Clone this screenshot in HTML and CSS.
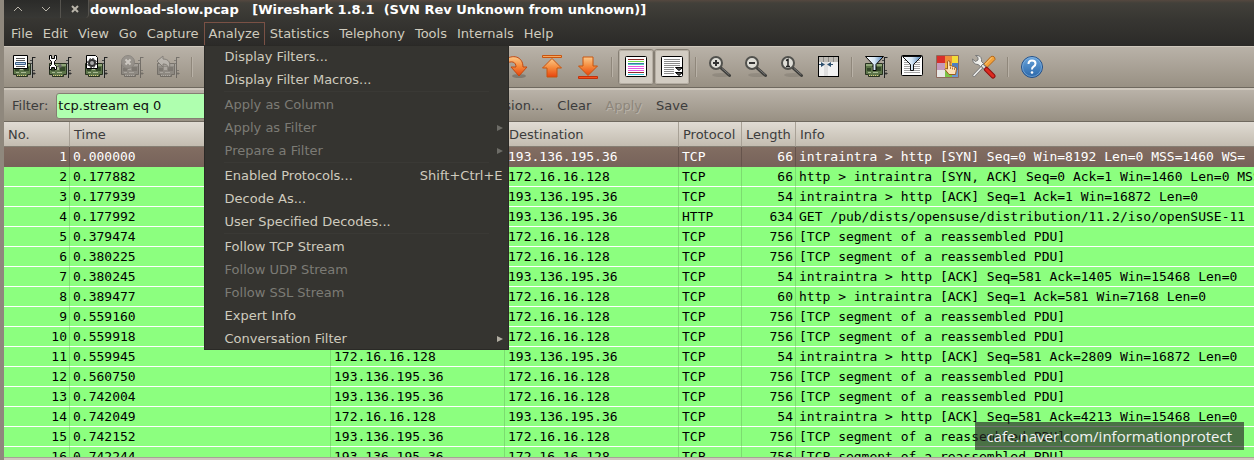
FILE: index.html
```html
<!DOCTYPE html>
<html lang="en">
<head>
  <meta charset="utf-8">
  <title>download-slow.pcap</title>
  <link rel="stylesheet" href="styles.css">
</head>
<body>
  <!-- shared icon parts -->
  <svg class="defs" width="0" height="0" aria-hidden="true">
    <defs>
      <linearGradient id="orange" x1="0" y1="0" x2="0" y2="1">
        <stop offset="0" stop-color="#fcc98a"/>
        <stop offset="0.5" stop-color="#f58a3c"/>
        <stop offset="1" stop-color="#e8430e"/>
      </linearGradient>
      <linearGradient id="funnel" x1="0" y1="0" x2="1" y2="0">
        <stop offset="0" stop-color="#ffffff"/>
        <stop offset="0.5" stop-color="#d5e6f5"/>
        <stop offset="1" stop-color="#4a7db5"/>
      </linearGradient>
      <linearGradient id="blue" x1="0" y1="0" x2="0" y2="1">
        <stop offset="0" stop-color="#6aa5dc"/>
        <stop offset="1" stop-color="#2a66a8"/>
      </linearGradient>
      <symbol id="nic" viewBox="0 0 24 24">
        <path d="M1.500 8.500h17v11h-3v2H4.500v-2h-3z" fill="#5d7549" stroke="#26311e"/>
        <path d="M2 9h16v2H2z" fill="#8fa578"/>
        <path d="M3 13h4v3H3zM12 12h5v4h-5z" fill="#34482a"/>
        <path d="M8 12h3v3H8zM4 17h3v1H4zM9 17h5v1H9z" fill="#a9b893"/>
        <path d="M5 20.500h10" stroke="#d9cb7c" stroke-dasharray="1 1"/>
        <path d="M19.500 4v17" stroke="#a3a8a2"/>
        <path d="M20.500 2v21M20.500 2.500h3M20.500 18.500h3" stroke="#222" fill="none"/>
        <path d="M18 5.500h2M18 8.500h2M21 15.500h2M22 17v3" stroke="#444"/>
      </symbol>
      <symbol id="lens" viewBox="0 0 24 24">
        <ellipse cx="13" cy="20" rx="9" ry="2" fill="#000" opacity="0.1"/>
        <path d="M13 13l8.500 7.500" stroke="#3d3d3a" stroke-width="3" stroke-linecap="round"/>
        <path d="M14 13.500l7 6" stroke="#777" stroke-width="1" stroke-linecap="round"/>
        <circle cx="8" cy="8" r="6" fill="#deddd6" stroke="#51514d" stroke-width="2"/>
      </symbol>
    </defs>
  </svg>

  <header class="titlebar">
    <div class="window-buttons">
      <button aria-label="Minimize"><svg width="10" height="8" viewBox="0 0 10 8"><path d="M1 6l4-4 4 4"/></svg></button>
      <button aria-label="Maximize"><svg width="10" height="8" viewBox="0 0 10 8"><path d="M1 2l4 4 4-4"/></svg></button>
      <button aria-label="Close" class="close"><svg width="8" height="8" viewBox="0 0 8 8"><path d="M1 1l6 6M7 1l-6 6"/></svg></button>
    </div>
    <h1>download-slow.pcap   [Wireshark 1.8.1  (SVN Rev Unknown from unknown)]</h1>
  </header>

  <nav class="menubar">
    <button>File</button>
    <button>Edit</button>
    <button>View</button>
    <button>Go</button>
    <button>Capture</button>
    <div class="menu-open">
      <button class="active" aria-expanded="true">Analyze</button>
      <div class="menu">
        <button>Display Filters...</button>
        <button>Display Filter Macros...</button>
        <hr>
        <button disabled>Apply as Column</button>
        <button disabled class="submenu">Apply as Filter</button>
        <button disabled class="submenu">Prepare a Filter</button>
        <hr>
        <button>Enabled Protocols...<span>Shift+Ctrl+E</span></button>
        <button>Decode As...</button>
        <button>User Specified Decodes...</button>
        <hr>
        <button>Follow TCP Stream</button>
        <button disabled>Follow UDP Stream</button>
        <button disabled>Follow SSL Stream</button>
        <button>Expert Info</button>
        <button class="submenu">Conversation Filter</button>
      </div>
    </div>
    <button>Statistics</button>
    <button>Telephony</button>
    <button>Tools</button>
    <button>Internals</button>
    <button>Help</button>
  </nav>

  <div class="toolbar">
    <button aria-label="Interfaces">
      <svg viewBox="0 0 24 24">
        <use href="#nic"/>
        <path d="M1.500 .500h14v13h-14z" fill="#fff" stroke="#000"/>
        <path d="M4 3.500h9M4 5.500h9M4 11.500h9" stroke="#555"/>
        <path d="M3.500 7.500h10v2h-10z" fill="#b9cde2" stroke="#3b5f88"/>
      </svg>
    </button>
    <button aria-label="Options">
      <svg viewBox="0 0 24 24">
        <use href="#nic"/>
        <path d="M10 10l3-1l1 3l-3 1z" fill="#666"/>
        <path d="M1.500 .500h2v3h3v-3h2v4l-2 2v3l2 2v3h-2v-2h-3v2h-2v-3l2-2v-3l-2-2z" fill="#fff" stroke="#000"/>
      </svg>
    </button>
    <button aria-label="Start">
      <svg viewBox="0 0 24 24">
        <use href="#nic"/>
        <path d="M2.500 .500h9l2 2v11h-11z" fill="#fff" stroke="#000"/>
        <circle cx="8" cy="8" r="3" fill="#aaa" stroke="#333" stroke-width="2"/>
        <circle cx="8" cy="8" r="4.500" fill="none" stroke="#333" stroke-width="1" stroke-dasharray="2 1.500"/>
      </svg>
    </button>
    <button disabled aria-label="Stop">
      <svg viewBox="0 0 24 24">
        <use href="#nic"/>
        <circle cx="8" cy="7" r="6.500" fill="#777" stroke="#555"/>
        <path d="M5.500 4.500l5 5M10.500 4.500l-5 5" stroke="#fff" stroke-width="2"/>
      </svg>
    </button>
    <button disabled aria-label="Restart">
      <svg viewBox="0 0 24 24">
        <use href="#nic"/>
        <path d="M1 6l6-5v3c6 0 8 4 6 10c-1-4-3-5-6-5v3z" fill="#ccc" stroke="#444"/>
      </svg>
    </button>
    <i class="sep"></i>
    <button aria-label="Open"></button>
    <button aria-label="Save"></button>
    <button aria-label="Close file"></button>
    <button aria-label="Reload"></button>
    <button aria-label="Print"></button>
    <i class="sep"></i>
    <button aria-label="Find"></button>
    <button aria-label="Back"></button>
    <button aria-label="Forward"></button>
    <button aria-label="Go to packet">
      <svg viewBox="0 0 24 24">
        <ellipse cx="15" cy="21" rx="7" ry="2" fill="#000" opacity="0.2"/>
        <path d="M1 5c7-6 18-4 18 7h4l-8 9l-8-9h5c0-5-4-7-11-3z" fill="url(#orange)" stroke="#c4480f"/>
      </svg>
    </button>
    <button aria-label="First packet">
      <svg viewBox="0 0 24 24">
        <path d="M2.500 .500h19v2h-19z" fill="#f8a75c" stroke="#c8540f"/>
        <path d="M12 3.500l9.500 9.500h-4.500v9h-10v-9h-4.500z" fill="url(#orange)" stroke="#c8540f"/>
      </svg>
    </button>
    <button aria-label="Last packet">
      <svg viewBox="0 0 24 24">
        <path d="M2.500 21.500h19v2h-19z" fill="#f4511c" stroke="#c4300a"/>
        <path d="M12 20.500l9.500-9.500h-4.500v-9h-10v9h-4.500z" fill="url(#orange)" stroke="#c8540f"/>
      </svg>
    </button>
    <i class="sep"></i>
    <button class="pressed" aria-label="Colorize" aria-pressed="true">
      <svg viewBox="0 0 24 24">
        <rect x="1.500" y="1.500" width="21" height="20" rx="1" fill="#fff" stroke="#000"/>
        <path d="M4 4.500h16" stroke="#8d2a2a"/>
        <path d="M4 6.500h16" stroke="#7be04e"/>
        <path d="M4 8.500h16" stroke="#3b78a8"/>
        <path d="M4 9.500h16" stroke="#5fd0c0"/>
        <path d="M4 11.500h16M4 13.500h16M4 15.500h16" stroke="#e35be0"/>
        <path d="M4 17.500h16" stroke="#8d2a2a"/>
        <path d="M4 19.500h16" stroke="#3bc6d8"/>
      </svg>
    </button>
    <button class="pressed" aria-label="Auto scroll" aria-pressed="true">
      <svg viewBox="0 0 24 24">
        <rect x="1.500" y="1.500" width="21" height="20" rx="1" fill="#fff" stroke="#000"/>
        <path d="M4 4.500h16M4 6.500h16M4 8.500h16M4 10.500h16M4 12.500h10M4 14.500h10M4 16.500h10M4 18.500h10" stroke="#8a8a8a"/>
        <path d="M15.500 12.500h7l-3.500 3zM15.500 17.500h7l-3.500 3z" fill="#555" stroke="#000"/>
      </svg>
    </button>
    <i class="sep"></i>
    <button aria-label="Zoom in">
      <svg viewBox="0 0 24 24"><use href="#lens"/><path d="M8 5v6M5 8h6" stroke="#333" stroke-width="2"/></svg>
    </button>
    <button aria-label="Zoom out">
      <svg viewBox="0 0 24 24"><use href="#lens"/><path d="M5 8h6" stroke="#333" stroke-width="2"/></svg>
    </button>
    <button aria-label="Normal size">
      <svg viewBox="0 0 24 24"><use href="#lens"/><path d="M6 5.500l2-1v7M6 11.500h4" fill="none" stroke="#222" stroke-width="1.500"/></svg>
    </button>
    <button aria-label="Resize columns">
      <svg viewBox="0 0 24 24">
        <rect x="2.500" y="1.500" width="20" height="20" fill="#f2f2f2" stroke="#000"/>
        <path d="M3 2h19v5H3z" fill="#bdbab4"/>
        <path d="M8 7h4v14H8z" fill="#dedede"/>
        <path d="M7.500 2v5M12.500 2v5M17.500 2v5" stroke="#8c8a86"/>
        <path d="M3 9.500h3M14 9.500h3" stroke="#2d4f6e" stroke-width="1"/>
        <path d="M5 7l4 2.500l-4 2.500zM15 7l-4 2.500l4 2.500z" fill="#2d4f6e"/>
      </svg>
    </button>
    <i class="sep"></i>
    <button aria-label="Capture filters">
      <svg viewBox="0 0 24 24">
        <use href="#nic"/>
        <path d="M1.500 1.500h18l-7.500 8v6h-3v-6z" fill="url(#funnel)" stroke="#000"/>
      </svg>
    </button>
    <button aria-label="Display filters">
      <svg viewBox="0 0 24 24">
        <rect x="1.500" y=".500" width="21" height="20" rx="1" fill="#fff" stroke="#000"/>
        <path d="M4 5.500h16M4 7.500h16M4 9.500h16M4 11.500h16M4 13.500h16M4 15.500h16M4 17.500h16" stroke="#a3a3a3"/>
        <path d="M2.500 1.500h19l-8 8v6h-3v-6z" fill="url(#funnel)" stroke="#111"/>
      </svg>
    </button>
    <button aria-label="Coloring rules">
      <svg viewBox="0 0 24 24">
        <path d="M1 1h8v7H1z" fill="#d92f2b"/><path d="M9 1h7v7H9z" fill="#ee8d3a"/><path d="M16 1h7v7h-7z" fill="#f3dc38"/>
        <path d="M1 8h8v7H1z" fill="#c49abb"/><path d="M9 8h7v7H9z" fill="#f0b63c"/><path d="M16 8h7v7h-7z" fill="#4d7fc0"/>
        <path d="M1 15h8v7H1z" fill="#e6e6e4"/><path d="M9 15h7v7H9z" fill="#7bc446"/><path d="M16 15h7v7h-7z" fill="#6b98d0"/>
        <path d="M.500 .500h22v22H.500z" fill="none" stroke="#8e6a5c"/>
        <path d="M11.500 6.500q1-1.500 2.500 0v4.500q1.500-1 2.500 .500q1.500-.500 2.200 .700q2-.200 1.800 2l-1 5.300h-6.500l-4-5q0-2 2.500-.500z" fill="#fbe0b8" stroke="#9a5b1c"/>
        <path d="M14.500 12v2M16.500 12.500v2M18.500 13v2" stroke="#b87b3a"/>
      </svg>
    </button>
    <button aria-label="Preferences">
      <svg viewBox="0 0 24 24">
        <path d="M2 20.500L12 10" stroke="#777" stroke-width="3" stroke-linecap="round"/>
        <path d="M2 20.500L12 10" stroke="#f1f1ee" stroke-width="1.500" stroke-linecap="round"/>
        <path d="M11.500 9.500L19 1.500q4-1 4 3L15 12.500z" fill="#f2a23a" stroke="#b3671a"/>
        <path d="M13 9.500l7-7" stroke="#fbd08a"/>
        <path d="M8 8l6 6" stroke="#777" stroke-width="4"/>
        <path d="M7 7l7 7" stroke="#e4e4e0" stroke-width="2"/>
        <path d="M14.500 14.500L21 21" stroke="#8d1010" stroke-width="5" stroke-linecap="round"/>
        <path d="M14.500 14.500L21 21" stroke="#dc2a20" stroke-width="3" stroke-linecap="round"/>
        <path d="M.500 4l3 2.500l2.500-1.500v-2.500L3.500 .500q5.500-.500 6 4v2l2 2l-3 3l-2.500-2q-5 0-5.500-5.500z" fill="#f0f0ec" stroke="#777"/>
      </svg>
    </button>
    <i class="sep"></i>
    <button aria-label="Help contents">
      <svg viewBox="0 0 24 24">
        <circle cx="12" cy="12" r="10.500" fill="url(#blue)" stroke="#22508a"/>
        <circle cx="12" cy="12" r="9.500" fill="none" stroke="#8fbce6" opacity="0.6"/>
        <path d="M8.500 9q0-3.500 3.500-3.500t3.500 3q0 2-2 3.200q-1.500 1-1.500 2.800" fill="none" stroke="#fff" stroke-width="2"/>
        <circle cx="12" cy="17.500" r="1.300" fill="#fff"/>
      </svg>
    </button>
  </div>

  <form class="filterbar">
    <label for="filter">Filter:</label>
    <input id="filter" type="text" value="tcp.stream eq 0">
    <button type="button">Expression...</button>
    <button type="button">Clear</button>
    <button type="button" disabled>Apply</button>
    <button type="button">Save</button>
  </form>

  <main class="packets">
    <table>
      <colgroup>
        <col class="c-no"><col class="c-time"><col class="c-addr"><col class="c-addr"><col class="c-proto"><col class="c-len"><col>
      </colgroup>
      <thead>
        <tr><th>No.</th><th>Time</th><th>Source</th><th>Destination</th><th>Protocol</th><th>Length</th><th>Info</th></tr>
      </thead>
      <tbody>
        <tr class="selected"><td>1</td><td>0.000000</td><td>172.16.16.128</td><td>193.136.195.36</td><td>TCP</td><td>66</td><td>intraintra &gt; http [SYN] Seq=0 Win=8192 Len=0 MSS=1460 WS=</td></tr>
        <tr><td>2</td><td>0.177882</td><td>193.136.195.36</td><td>172.16.16.128</td><td>TCP</td><td>66</td><td>http &gt; intraintra [SYN, ACK] Seq=0 Ack=1 Win=1460 Len=0 MSS</td></tr>
        <tr><td>3</td><td>0.177939</td><td>172.16.16.128</td><td>193.136.195.36</td><td>TCP</td><td>54</td><td>intraintra &gt; http [ACK] Seq=1 Ack=1 Win=16872 Len=0</td></tr>
        <tr><td>4</td><td>0.177992</td><td>172.16.16.128</td><td>193.136.195.36</td><td>HTTP</td><td>634</td><td>GET /pub/dists/opensuse/distribution/11.2/iso/openSUSE-11</td></tr>
        <tr><td>5</td><td>0.379474</td><td>193.136.195.36</td><td>172.16.16.128</td><td>TCP</td><td>756</td><td>[TCP segment of a reassembled PDU]</td></tr>
        <tr><td>6</td><td>0.380225</td><td>193.136.195.36</td><td>172.16.16.128</td><td>TCP</td><td>756</td><td>[TCP segment of a reassembled PDU]</td></tr>
        <tr><td>7</td><td>0.380245</td><td>172.16.16.128</td><td>193.136.195.36</td><td>TCP</td><td>54</td><td>intraintra &gt; http [ACK] Seq=581 Ack=1405 Win=15468 Len=0</td></tr>
        <tr><td>8</td><td>0.389477</td><td>193.136.195.36</td><td>172.16.16.128</td><td>TCP</td><td>60</td><td>http &gt; intraintra [ACK] Seq=1 Ack=581 Win=7168 Len=0</td></tr>
        <tr><td>9</td><td>0.559160</td><td>193.136.195.36</td><td>172.16.16.128</td><td>TCP</td><td>756</td><td>[TCP segment of a reassembled PDU]</td></tr>
        <tr><td>10</td><td>0.559918</td><td>193.136.195.36</td><td>172.16.16.128</td><td>TCP</td><td>756</td><td>[TCP segment of a reassembled PDU]</td></tr>
        <tr><td>11</td><td>0.559945</td><td>172.16.16.128</td><td>193.136.195.36</td><td>TCP</td><td>54</td><td>intraintra &gt; http [ACK] Seq=581 Ack=2809 Win=16872 Len=0</td></tr>
        <tr><td>12</td><td>0.560750</td><td>193.136.195.36</td><td>172.16.16.128</td><td>TCP</td><td>756</td><td>[TCP segment of a reassembled PDU]</td></tr>
        <tr><td>13</td><td>0.742004</td><td>193.136.195.36</td><td>172.16.16.128</td><td>TCP</td><td>756</td><td>[TCP segment of a reassembled PDU]</td></tr>
        <tr><td>14</td><td>0.742049</td><td>172.16.16.128</td><td>193.136.195.36</td><td>TCP</td><td>54</td><td>intraintra &gt; http [ACK] Seq=581 Ack=4213 Win=15468 Len=0</td></tr>
        <tr><td>15</td><td>0.742152</td><td>193.136.195.36</td><td>172.16.16.128</td><td>TCP</td><td>756</td><td>[TCP segment of a reassembled PDU]</td></tr>
        <tr><td>16</td><td>0.742244</td><td>193.136.195.36</td><td>172.16.16.128</td><td>TCP</td><td>756</td><td>[TCP segment of a reassembled PDU]</td></tr>
      </tbody>
    </table>
  </main>

  <div class="watermark">cafe.naver.com/informationprotect</div>
</body>
</html>
```
FILE: styles.css
```css
* {
  margin: 0;
  padding: 0;
  box-sizing: border-box;
}

body {
  height: 100vh;
  display: flex;
  flex-direction: column;
  overflow: hidden;
  border-left: 4px solid #8f887d;
  background: #cfc8bd;
  color: #3c3c3c;
  font: 13px/20px "DejaVu Sans", sans-serif;
}

button {
  border: none;
  background: none;
  color: inherit;
  font: inherit;
  white-space: nowrap;
}

svg {
  display: block;
}

.defs {
  position: absolute;
}

/* title bar */
.titlebar {
  height: 20px;
  flex: none;
  display: flex;
  gap: 1px;
  background: linear-gradient(#55483f, #42403a 3px, #373632);
}

.window-buttons {
  display: flex;
  height: 18px;
  border-radius: 0 0 4px 4px;
  border-right: 1px solid #55534e;
  background: linear-gradient(#2b2b29, #383835);
}

.window-buttons button {
  width: 28px;
  display: flex;
  align-items: center;
  justify-content: center;
}

.window-buttons .close {
  border-left: 1px solid #55534e;
}

.window-buttons path {
  fill: none;
  stroke: #b9b5aa;
  stroke-width: 1;
}

.window-buttons .close path {
  stroke-width: 2;
}

.titlebar h1 {
  color: #fff;
  font-size: 13px;
  line-height: 20px;
  white-space: pre;
}

/* menu bar */
.menubar {
  height: 26px;
  flex: none;
  display: flex;
  padding: 2px 0 1px 2px;
  background: linear-gradient(#373632, #2b2a28);
  color: #cfcbbe;
}

.menubar > button,
.menubar .active {
  height: 23px;
  padding: 0 5px;
}

.menu-open {
  position: relative;
}

.menubar .active {
  border: 1px solid #7a5145;
  border-bottom: none;
  padding: 0 4px 1px;
}

.menu {
  position: absolute;
  left: 0;
  top: 23px;
  z-index: 2;
  width: 305px;
  background: #353430;
  box-shadow: inset 0 0 0 1px #2a2926;
}

.menu button {
  display: flex;
  justify-content: space-between;
  align-items: center;
  width: 100%;
  height: 23px;
  padding: 0 6px 0 21px;
}

.menu button:disabled {
  color: #7c7b75;
}

.menu .submenu::after {
  content: "";
  border: 3px solid transparent;
  border-left: 6px solid currentColor;
  border-right: none;
  opacity: 0.8;
}

.menu hr {
  height: 2px;
  margin: 0 20px;
  border: none;
  border-top: 1px solid #3a3935;
}

/* toolbar */
.toolbar {
  height: 42px;
  flex: none;
  display: flex;
  align-items: center;
  padding: 0 2px;
  background: linear-gradient(#b9b2a8, #989083);
  border-top: 1px solid #cfc8bd;
  border-bottom: 1px solid #6f695f;
}

.toolbar button {
  width: 36px;
  height: 36px;
  flex: none;
  display: flex;
  align-items: center;
  justify-content: center;
}

.toolbar svg {
  width: 24px;
  height: 24px;
}

.toolbar button:disabled svg {
  opacity: 0.4;
  filter: grayscale(1);
}

.toolbar .pressed {
  border: 1px solid #857e73;
  border-radius: 3px;
  outline: 1px solid #b5aea3;
  outline-offset: -2px;
  background: #d2ccc2;
}

.sep {
  width: 2px;
  height: 20px;
  margin: 0 5px;
  flex: none;
  border-left: 1px solid #8f877b;
  border-right: 1px solid #b9b2a7;
}

/* filter bar */
.filterbar {
  height: 34px;
  flex: none;
  display: flex;
  align-items: center;
  gap: 14px;
  padding: 0 8px;
  background: linear-gradient(#b9b2a8, #989083);
  border-top: 2px solid #cfc8bd;
  border-bottom: 1px solid #6f695f;
}

.filterbar label {
  margin-right: -6px;
}

.filterbar input {
  width: 390px;
  height: 26px;
  padding: 0 1px;
  border: 1px solid #857e73;
  border-radius: 3px;
  background: #afffaf;
  color: #111;
  font: inherit;
}

.filterbar button:disabled {
  color: #8d867b;
  text-shadow: 1px 1px #bab3a9;
}

/* packet list */
.packets {
  flex: 1;
  min-height: 0;
  margin-bottom: 2px;
  overflow: hidden;
  background: #fff;
  border-bottom: 1px solid #a8a196;
}

table {
  width: 100%;
  table-layout: fixed;
  border-collapse: separate;
  border-spacing: 0;
}

.c-no { width: 66px; }
.c-time { width: 261px; }
.c-addr { width: 174px; }
.c-proto { width: 63px; }
.c-len { width: 54px; }

th {
  height: 25px;
  padding: 2px 4px 0;
  text-align: left;
  font-weight: normal;
  background: linear-gradient(#e0dbd3, #c3bcb0);
  border-right: 1px solid #a8a196;
  border-bottom: 1px solid #857e73;
}

td {
  height: 20px;
  padding: 0 2px 0 3px;
  overflow: hidden;
  white-space: nowrap;
  font: 13px/19px "DejaVu Sans Mono", monospace;
  color: #000;
  background: #8cff7f;
  border-right: 1px solid #7cdc70;
  border-bottom: 1px solid #fff;
}

th:last-child,
td:last-child {
  border-right: none;
}

td:nth-child(1),
td:nth-child(6) {
  text-align: right;
}

.selected td {
  color: #fff;
  background: linear-gradient(#826d62, #77635a);
  border-right-color: #66544c;
  border-bottom-color: #77635a;
}

.watermark {
  position: absolute;
  right: 10px;
  bottom: 10px;
  z-index: 3;
  padding: 0 12px;
  background: rgba(40, 40, 40, 0.66);
  color: #f2f2f2;
  font: 15px/28px "Open Sans", sans-serif;
}
```
